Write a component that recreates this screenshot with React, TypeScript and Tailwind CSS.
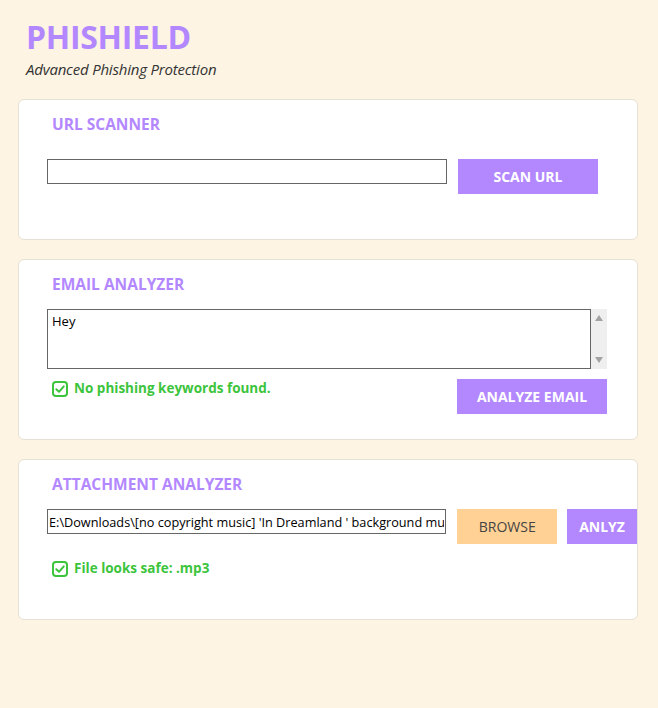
import React from "react";

const font = { fontFamily: '"Open Sans", "Noto Sans", sans-serif' };

function CheckBox() {
  return (
    <svg width="16" height="16" viewBox="0 0 16 16" fill="none" className="shrink-0">
      <rect x="1" y="1" width="14" height="14" rx="3" stroke="#3cc43c" strokeWidth="2" />
      <path d="M4.3 8.2 L7 10.8 L11.8 5.4" stroke="#3cc43c" strokeWidth="2" strokeLinecap="round" strokeLinejoin="round" />
    </svg>
  );
}

function Status({ text }: { text: string }) {
  return (
    <div className="flex items-center gap-[6px] text-[13.5px] font-bold text-[#3cc43c] leading-none">
      <CheckBox />
      <span>{text}</span>
    </div>
  );
}

function Heading({ children }: { children: React.ReactNode }) {
  return (
    <div className="ml-[5px] text-[15.5px] font-bold leading-[19px] text-[#b388ff]">
      {children}
    </div>
  );
}

export default function App() {
  return (
    <div
      className="min-h-screen w-[658px] bg-[#fdf4e3] px-[18px] pt-[17px] text-[#222]"
      style={font}
    >
      <div className="pl-[8px]">
        <div className="text-[32px] font-bold leading-[40px] text-[#b388ff] tracking-[-0.3px]">
          PHISHIELD
        </div>
        <div className="mt-[3px] text-[15px] italic leading-[18px] text-[#333] tracking-[-0.2px]">
          Advanced Phishing Protection
        </div>
      </div>

      <div className="mt-[21px] flex flex-col gap-[19px]">
        {/* URL scanner */}
        <div className="h-[141px] w-[620px] rounded-[6px] border border-[#e6e1d6] bg-white pl-[28px] pt-[15px]">
          <Heading>URL SCANNER</Heading>
          <div className="mt-[25px] flex items-start gap-[11px]">
            <div className="h-[25px] w-[400px] border border-[#666] bg-white" />
            <div className="flex h-[35px] w-[140px] items-center justify-center bg-[#b388ff] text-[14px] font-bold text-white">
              SCAN URL
            </div>
          </div>
        </div>

        {/* Email analyzer */}
        <div className="h-[181px] w-[620px] rounded-[6px] border border-[#e6e1d6] bg-white pl-[28px] pt-[15px]">
          <Heading>EMAIL ANALYZER</Heading>
          <div className="mt-[15px] flex">
            <div className="h-[60px] w-[544px] border border-[#666] bg-white px-[4px] pt-[2px] text-[13px] leading-[18px] text-black">
              Hey
            </div>
            <div className="flex h-[60px] w-[16px] flex-col items-center justify-between bg-[#efefef] py-[6px]">
              <div className="h-0 w-0 border-x-[4px] border-b-[6px] border-x-transparent border-b-[#a3a3a3]" />
              <div className="h-0 w-0 border-x-[4px] border-t-[6px] border-x-transparent border-t-[#a3a3a3]" />
            </div>
          </div>
          <div className="mt-[10px] flex items-start">
            <div className="ml-[5px] mt-[2px] w-[405px]">
              <Status text="No phishing keywords found." />
            </div>
            <div className="flex h-[35px] w-[150px] items-center justify-center bg-[#b388ff] text-[14px] font-bold text-white">
              ANALYZE EMAIL
            </div>
          </div>
        </div>

        {/* Attachment analyzer */}
        <div className="h-[161px] w-[620px] rounded-[6px] border border-[#e6e1d6] bg-white pl-[28px] pt-[15px]">
          <Heading>ATTACHMENT ANALYZER</Heading>
          <div className="mt-[15px] flex items-start">
            <input
              readOnly
              value="E:\Downloads\[no copyright music] 'In Dreamland ' background music.mp3"
              className="h-[25px] w-[400px] border border-[#666] bg-white px-[1px] text-[12.7px] text-black outline-none"
              style={font}
            />
            <div className="ml-[11px] flex h-[35px] w-[100px] items-center justify-center bg-[#ffd194] text-[14px] text-[#444]">
              BROWSE
            </div>
            <div className="ml-[10px] flex h-[35px] w-[70px] items-center justify-center bg-[#b388ff] text-[14px] font-bold text-white">
              ANLYZ
            </div>
          </div>
          <div className="ml-[5px] mt-[17px]">
            <Status text="File looks safe: .mp3" />
          </div>
        </div>
      </div>
    </div>
  );
}
